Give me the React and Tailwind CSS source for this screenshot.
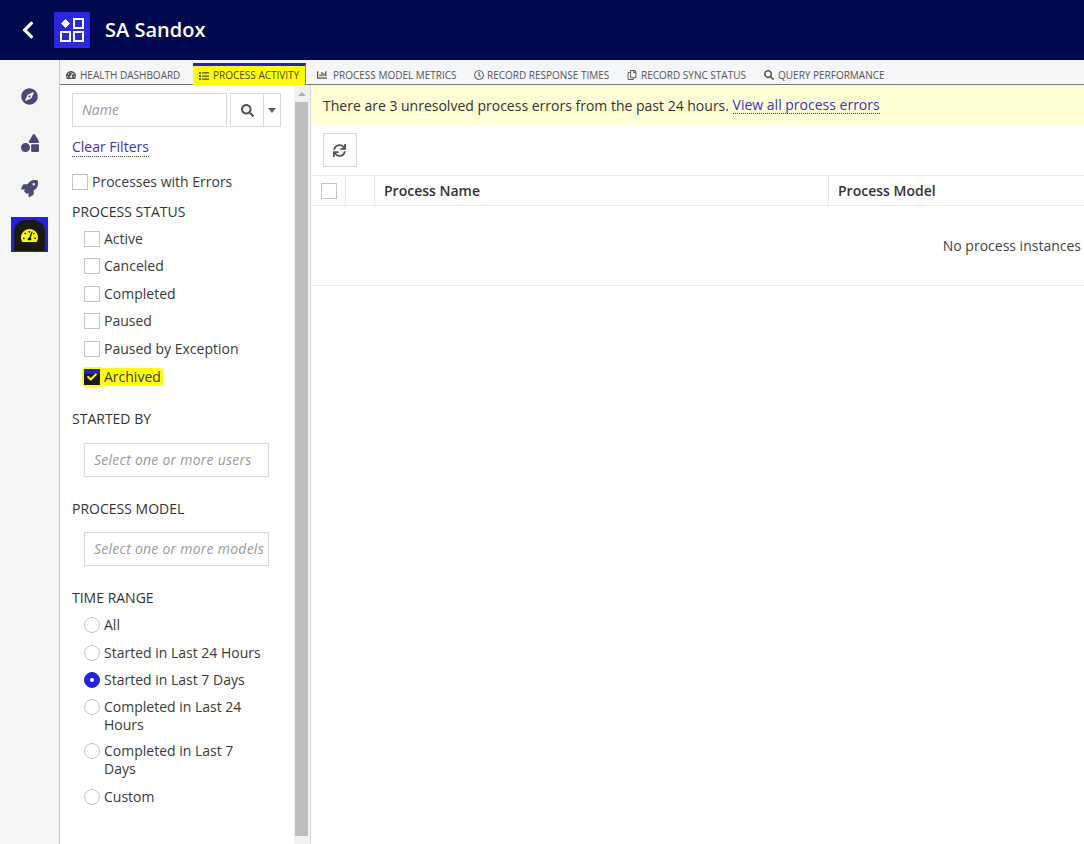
import React from "react";
import {
  FaCheck,
  FaChevronLeft,
  FaChartBar,
  FaCompass,
  FaList,
  FaRegClock,
  FaRegCopy,
  FaRocket,
  FaSearch,
  FaShapes,
  FaSync,
  FaTachometerAlt,
} from "react-icons/fa";

const tabs = [
  { label: "HEALTH DASHBOARD", icon: <FaTachometerAlt />, width: "w-[128px]", gap: "gap-[4px]" },
  { label: "PROCESS ACTIVITY", icon: <FaList />, width: "w-[113px]", gap: "gap-[4px]", active: true },
  { label: "PROCESS MODEL METRICS", icon: <FaChartBar />, width: "ml-[10px] w-[157px]", gap: "gap-[6px]" },
  { label: "RECORD RESPONSE TIMES", icon: <FaRegClock />, width: "w-[153px]", gap: "gap-[3px]" },
  { label: "RECORD SYNC STATUS", icon: <FaRegCopy />, width: "w-[137px]", gap: "gap-[4px]" },
  { label: "QUERY PERFORMANCE", icon: <FaSearch />, width: "w-[130px]", gap: "gap-[4px]" },
];

const statuses = ["Active", "Canceled", "Completed", "Paused", "Paused by Exception"];

const timeRanges = [
  { label: "All", row: "mb-[10px]" },
  { label: "Started in Last 24 Hours", row: "mb-[9px]" },
  { label: "Started in Last 7 Days", row: "mb-[9px]", checked: true },
  { label: "Completed in Last 24 Hours", row: "mb-[8px]" },
  { label: "Completed in Last 7 Days", row: "mb-[10px]" },
  { label: "Custom", row: "" },
];

function Checkbox({ label, className = "" }) {
  return (
    <div className={`flex h-[18px] items-center gap-[4px] text-[14px] leading-[18px] text-[#3a3a3a] ${className}`}>
      <span className="h-4 w-4 shrink-0 border border-[#c4c4c4] bg-white" />
      <span>{label}</span>
    </div>
  );
}

function SectionLabel({ children, className = "" }) {
  return <div className={`text-[14px] leading-[18px] text-[#333] ${className}`}>{children}</div>;
}

function PickerInput({ placeholder }) {
  return (
    <div className="ml-3 flex h-[34px] w-[185px] items-center overflow-hidden whitespace-nowrap border border-[#d8d8d8] pl-[9px] text-[14px] italic tracking-[0.25px] text-[#9a9a9a]">
      {placeholder}
    </div>
  );
}

function FilterPanel() {
  return (
    <aside className="w-[234px] shrink-0 pl-3 pt-[8px]">
      <div className="flex h-[34px]">
        <div className="flex w-[155px] items-center border border-[#d8d8d8] pb-[2px] pl-[9px] text-[14px] italic text-[#9a9a9a]">
          Name
        </div>
        <div className="ml-[3px] flex w-[51px] border border-[#d8d8d8]">
          <span className="flex w-[33px] items-center justify-center border-r border-[#d8d8d8] text-[13px] text-[#555]">
            <FaSearch />
          </span>
          <span className="flex flex-1 items-center justify-center">
            <span className="h-0 w-0 border-x-[4px] border-t-[5px] border-x-transparent border-t-[#666]" />
          </span>
        </div>
      </div>

      <div className="mt-[7px] h-[20px]">
        <span className="border-b border-dotted border-[#444] text-[14px] leading-[18px] text-[#3d34b8]">Clear Filters</span>
      </div>

      <Checkbox label="Processes with Errors" className="mt-[19px]" />
      <SectionLabel className="mt-[12px]">PROCESS STATUS</SectionLabel>

      <div className="mt-[8.8px] flex flex-col gap-[9.55px] pl-3">
        {statuses.map((status) => (
          <Checkbox key={status} label={status} />
        ))}
        <div className="flex h-[18px] items-center text-[14px] leading-[18px] text-[#3a3a3a]">
          <span className="-ml-[2px] flex h-[20px] w-[20px] items-center rounded-l-[4px] bg-[#ffff00] pl-[2px]">
            <span className="relative flex h-4 w-4 items-center justify-center bg-[#1c1a0c] text-[10px] text-[#ffff00]">
              <span className="absolute inset-x-0 top-0 h-[5px] bg-[#2222cc]" />
              <FaCheck className="relative" />
            </span>
          </span>
          <span className="rounded-r-[4px] bg-[#ffff00] pl-[2px] pr-[2px]">Archived</span>
        </div>
      </div>

      <SectionLabel className="mt-[24.45px]">STARTED BY</SectionLabel>
      <div className="mt-[15px]">
        <PickerInput placeholder="Select one or more users" />
      </div>

      <SectionLabel className="mt-[23px]">PROCESS MODEL</SectionLabel>
      <div className="mt-[14px]">
        <PickerInput placeholder="Select one or more models" />
      </div>

      <SectionLabel className="mt-[23px]">TIME RANGE</SectionLabel>
      <div className="mt-[9px] flex flex-col pl-3">
        {timeRanges.map((range) => (
          <div key={range.label} className={`flex items-start gap-[4px] text-[14px] leading-[18px] text-[#3a3a3a] ${range.row}`}>
            <span
              className={`mt-[1px] flex h-4 w-4 shrink-0 items-center justify-center rounded-full border ${
                range.checked ? "border-[#2222e0] bg-[#2222e0]" : "border-[#c4c4c4] bg-white"
              }`}
            >
              {range.checked && <span className="h-1 w-1 rounded-full bg-white" />}
            </span>
            <span className="w-[160px]">{range.label}</span>
          </div>
        ))}
      </div>
    </aside>
  );
}

function Scrollbar() {
  return (
    <div className="flex w-[17px] shrink-0 flex-col border-r border-[#d8d8d8] bg-[#f1f1f1] pl-[1px] pr-[2px]">
      <div className="flex h-[17px] items-center justify-center">
        <span className="h-0 w-0 border-x-[4px] border-b-[4px] border-x-transparent border-b-[#b0b0b0]" />
      </div>
      <div className="h-[734px] bg-[#bdbdbd]" />
    </div>
  );
}

function MainArea() {
  return (
    <main className="min-w-0 flex-1 overflow-hidden">
      <div className="flex h-[40px] items-center whitespace-nowrap bg-[#ffffd6] pl-3 text-[14px] text-[#333]">
        There are 3 unresolved process errors from the past 24 hours.&nbsp;
        <span className="border-b border-dotted border-[#444] leading-[17px] text-[#3d34b8]">View all process errors</span>
      </div>
      <div className="px-3 pb-[8px] pt-[8px]">
        <div className="flex h-[34px] w-[34px] items-center justify-center border border-[#d8d8d8] pr-[2px] text-[13px] text-[#555]">
          <FaSync />
        </div>
      </div>
      <div className="text-[14px]">
        <div className="flex h-[31px] items-center border-y border-[#e8e8e8] font-semibold text-[#333]">
          <div className="flex h-full w-[35px] items-center border-r border-[#e8e8e8] pl-[10px]">
            <span className="h-4 w-4 border border-[#c4c4c4] bg-white" />
          </div>
          <div className="h-full w-[29px] border-r border-[#e8e8e8]" />
          <div className="flex h-full w-[454px] items-center border-r border-[#e8e8e8] pl-[9px]">Process Name</div>
          <div className="pl-[9px]">Process Model</div>
        </div>
        <div className="flex h-[80px] items-center justify-end border-b border-[#e8e8e8] pr-[3px] text-[#444]">
          No process instances
        </div>
      </div>
    </main>
  );
}

export default function App() {
  return (
    <div className="flex h-[844px] flex-col overflow-hidden bg-white font-['Open_Sans',sans-serif]">
      <header className="flex h-[60px] shrink-0 items-center bg-[#020a4f] text-white">
        <FaChevronLeft className="ml-[18px] text-[20px]" />
        <div className="ml-[16px] flex h-9 w-9 items-center justify-center bg-[#2a27e2]">
          <svg width="26" height="26" viewBox="0 0 26 26" fill="none" stroke="white" strokeWidth="2">
            <path d="M6.5 2.5 L10.5 6.5 L6.5 10.5 L2.5 6.5 Z" fill="white" strokeWidth="1" />
            <rect x="15" y="2" width="9" height="9" />
            <rect x="2" y="15" width="9" height="9" />
            <rect x="15" y="15" width="9" height="9" />
          </svg>
        </div>
        <div className="ml-[15px] text-[20px] font-semibold">SA Sandox</div>
      </header>

      <div className="flex min-h-0 flex-1">
        <nav className="flex w-[60px] shrink-0 flex-col items-center border-r border-[#c8c8c8] bg-[#f5f5f6] pt-[28px] text-[#4a4a78]">
          <FaCompass className="text-[17px]" />
          <FaShapes className="mt-[29px] text-[18px]" />
          <FaRocket className="mt-[28px] text-[17px]" />
          <div className="mt-[20px] flex h-[35px] w-[37px] items-end justify-center bg-[#2222dd] pb-[1px]">
            <div className="flex h-[31px] w-[31px] items-center justify-center rounded-t-xl bg-[#1c1a0c] text-[17px] text-[#ffff00]">
              <FaTachometerAlt />
            </div>
          </div>
        </nav>

        <div className="flex min-w-0 flex-1 flex-col">
          <div className="flex h-[25px] shrink-0 items-end border-b border-[#777] bg-[#f5f6f8] pl-[5px]">
            {tabs.map((tab) => (
              <div
                key={tab.label}
                className={`flex shrink-0 items-center whitespace-nowrap text-[10px] ${tab.gap} ${tab.width} ${
                  tab.active
                    ? "-mb-px h-[22px] border-r border-t-[3px] border-r-[#777] border-t-[#2222cc] bg-[#ffff00] pl-[6px] text-[#444]"
                    : "h-[24px] pl-[1px] pt-[6px] text-[#555]"
                }`}
              >
                <span className="text-[10px]">{tab.icon}</span>
                <span>{tab.label}</span>
              </div>
            ))}
          </div>
          <div className="flex min-h-0 flex-1">
            <FilterPanel />
            <Scrollbar />
            <MainArea />
          </div>
        </div>
      </div>
    </div>
  );
}
